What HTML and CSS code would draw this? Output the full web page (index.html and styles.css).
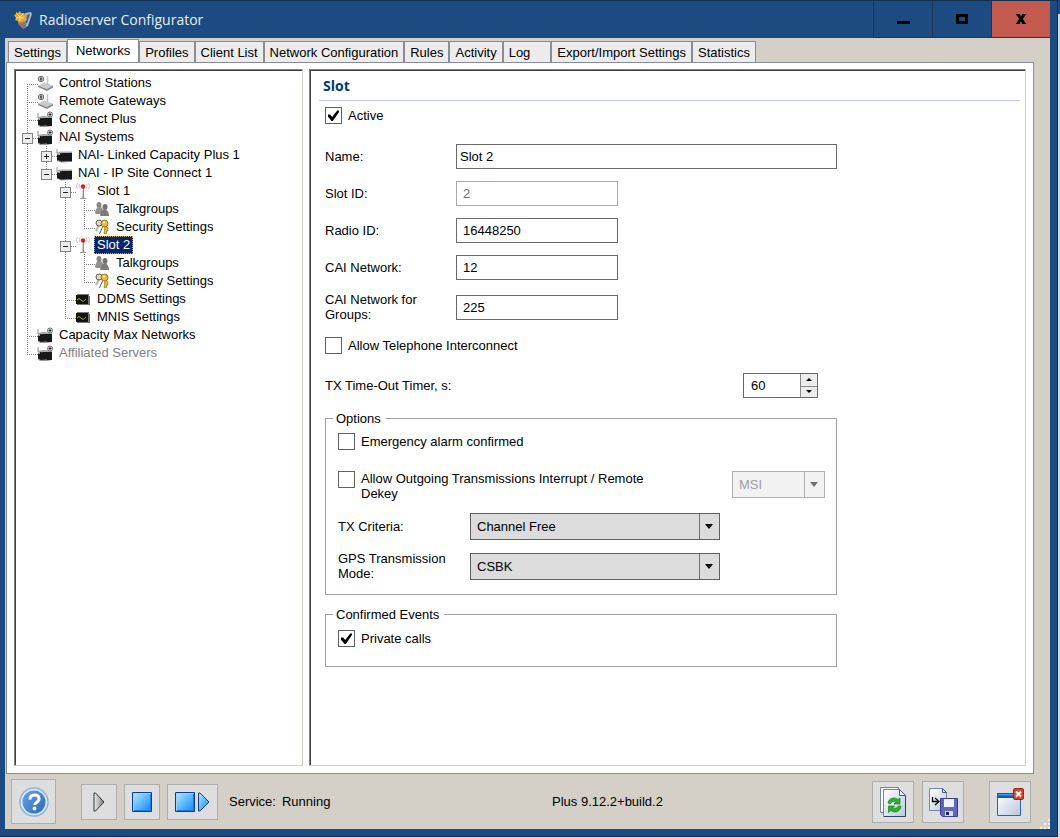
FILE: index.html
```html
<!DOCTYPE html>
<html lang="en">
<head>
  <meta charset="utf-8">
  <meta name="viewport" content="width=device-width, initial-scale=1.0">
  <title>Radioserver Configurator</title>
  <link rel="stylesheet" href="styles.css">
</head>
<body>
  <!-- Icon set -->
  <svg class="sprite" aria-hidden="true">
    <defs>
      <linearGradient id="blue" x1="0" y1="0" x2="1" y2="1">
        <stop offset="0" stop-color="#c4e6ff"/>
        <stop offset="0.5" stop-color="#5cbaff"/>
        <stop offset="1" stop-color="#0a86f5"/>
      </linearGradient>
      <linearGradient id="grey" x1="0" y1="0" x2="1" y2="0">
        <stop offset="0" stop-color="#eeeeee"/>
        <stop offset="1" stop-color="#777777"/>
      </linearGradient>
      <linearGradient id="paper" x1="0" y1="0" x2="1" y2="1">
        <stop offset="0" stop-color="#ffffff"/>
        <stop offset="1" stop-color="#b9c8de"/>
      </linearGradient>
      <linearGradient id="help" x1="0" y1="0" x2="1" y2="1">
        <stop offset="0" stop-color="#6ba5e6"/>
        <stop offset="1" stop-color="#2a68ba"/>
      </linearGradient>
    </defs>
    <symbol id="station" viewBox="0 0 16 16">
      <path d="M1 10.500l6-3 9 3-6 3.500z" fill="#c9cccd"/>
      <path d="M1 10.500l9 3.500 6-3.500v2L10 16l-9-4z" fill="#85898b"/>
      <path d="M10.500 1v9" stroke="#c0c3c5" stroke-width="1.500"/>
      <circle cx="4" cy="4" r="2.700" fill="#fff" stroke="#666"/>
      <path d="M4 2v4M2.500 4h3" stroke="#222"/>
    </symbol>
    <symbol id="repeater" viewBox="0 0 16 16">
      <path d="M1 2v5" stroke="#888"/>
      <path d="M1 6l2 1 12-.5v8.500l-11 1-3-1.500z" fill="#161918"/>
      <path d="M1 6l2 1v2l-2-.5z" fill="#b4b6b6"/>
      <path d="M1 6l3 1.200L15 6.500v-1L6 5z" fill="#a4a7a7"/>
      <path d="M1 14l3 1.500 6-.5" stroke="#aaa" fill="none"/>
      <circle cx="13" cy="3.500" r="2.500" fill="#fff" stroke="#666"/>
      <path d="M13 2v3M11.500 3.500h3" stroke="#222"/>
    </symbol>
    <symbol id="unit" viewBox="0 0 16 16">
      <path d="M1 2v5" stroke="#999"/>
      <path d="M1 5l3 1 12-.5v9l-11 .5-4-1.500z" fill="#161918"/>
      <path d="M1 5l3 1v2l-3-.5z" fill="#bbb"/>
      <path d="M1 5l3 1.200L16 5.500v-1H6z" fill="#a9acac"/>
      <path d="M2 13.500l3 1.500 9-.5" stroke="#8a8c8c" fill="none"/>
    </symbol>
    <symbol id="antenna" viewBox="0 0 16 16">
      <path d="M8 4L6.500 15h3z" fill="#c5c5c8"/>
      <path d="M8.500 5v10" stroke="#8a8a90"/>
      <path d="M5 15.500h6" stroke="#999"/>
      <circle cx="8" cy="3.500" r="2.200" fill="#d51f26"/>
      <path d="M4.500 1q-1 2 0 4M2.500 0q-2 3 0 6M11.500 1q1 2 0 4M13.500 0q2 3 0 6" stroke="#d2c6c6" fill="none"/>
    </symbol>
    <symbol id="people" viewBox="0 0 16 16">
      <ellipse cx="5" cy="4" rx="2.500" ry="3" fill="#8b8585"/>
      <path d="M1 12q1-5 3-6h3l3 4v3H2z" fill="#948f8f"/>
      <ellipse cx="11" cy="6" rx="2.500" ry="3" fill="#777070"/>
      <path d="M6 15q1-6 4-6.500h2q3 2 3 6.500z" fill="#7f7979"/>
      <path d="M11.500 10v3" stroke="#b56060"/>
    </symbol>
    <symbol id="keys" viewBox="0 0 16 16">
      <path d="M5 6L2 12" stroke="#b5b5b5" stroke-width="2"/>
      <circle cx="5" cy="4" r="3" fill="#e4dac0" stroke="#625b48"/>
      <path d="M11 7l-1 7.500h2.500V12h1.500V9l-2-2z" fill="#ecb52a" stroke="#8a6414" stroke-width=".6"/>
      <circle cx="10.500" cy="4.500" r="3.500" fill="#f2b92b" stroke="#80601d" stroke-width=".8"/>
      <circle cx="10" cy="3.500" r="1" fill="#fff"/>
      <path d="M8.500 8l-3 7" stroke="#555"/>
    </symbol>
    <symbol id="scope" viewBox="0 0 16 16">
      <path d="M2 3h12v11H2z" fill="#777"/>
      <path d="M1 4h12v9H1z" fill="#10140c"/>
      <path d="M2 9q2-3 4 0t5-1" stroke="#a8ad28" fill="none"/>
      <path d="M14.500 5v9" stroke="#666"/>
    </symbol>
  </svg>

  <div class="window">
    <header class="titlebar">
      <svg class="app-icon" viewBox="0 0 20 20" aria-hidden="true">
        <path d="M12 3l6-1 1 2-4 12-4 2z" fill="#aab4c3"/>
        <path d="M14 5l3-1-3 9-2 1z" fill="#3c5f91"/>
        <path d="M5 11l8 2v5l-3 1-5-5z" fill="#8a7776"/>
        <path d="M1 5l2-1V2l2 1 2-2 1 2h3l1 2 2 1-1 2 1 2-3 1-1 2-2-1-2 1-1-2-3-1 1-2z" fill="#e2aa30"/>
        <path d="M4 4l3 3 3-3M3 8l4-1 4 1M7 7v4" stroke="#fae39a" fill="none"/>
      </svg>
      <h1 class="window-title">Radioserver Configurator</h1>
      <div class="window-buttons">
        <button type="button" aria-label="Minimize">
          <svg width="14" height="12" viewBox="0 0 14 12"><path d="M1 8h13v3H1z"/></svg>
        </button>
        <button type="button" aria-label="Maximize">
          <svg width="12" height="10" viewBox="0 0 12 10"><path d="M1.500 1.500h9v7h-9z" fill="none" stroke="#000" stroke-width="3"/></svg>
        </button>
        <button type="button" class="close" aria-label="Close">
          <svg width="12" height="10" viewBox="0 0 12 10"><path d="M2.500 0l7 10M9.500 0l-7 10" stroke="#000" stroke-width="3"/><path d="M1 .5h4M7 .5h4M1 9.500h4M7 9.500h4" stroke="#000"/></svg>
        </button>
      </div>
    </header>

    <main class="client">
      <nav class="tabs" role="tablist">
        <button type="button" role="tab" class="tab">Settings</button>
        <button type="button" role="tab" class="tab active" aria-selected="true">Networks</button>
        <button type="button" role="tab" class="tab">Profiles</button>
        <button type="button" role="tab" class="tab">Client List</button>
        <button type="button" role="tab" class="tab">Network Configuration</button>
        <button type="button" role="tab" class="tab">Rules</button>
        <button type="button" role="tab" class="tab">Activity</button>
        <button type="button" role="tab" class="tab log">Log</button>
        <button type="button" role="tab" class="tab">Export/Import Settings</button>
        <button type="button" role="tab" class="tab">Statistics</button>
      </nav>

      <div class="tab-page">
        <aside class="tree-pane">
          <ul class="tree">
            <li><div class="node"><svg class="icon"><use href="#station"/></svg><span class="text">Control Stations</span></div></li>
            <li><div class="node"><svg class="icon"><use href="#station"/></svg><span class="text">Remote Gateways</span></div></li>
            <li><div class="node"><svg class="icon"><use href="#repeater"/></svg><span class="text">Connect Plus</span></div></li>
            <li>
              <div class="node"><button type="button" class="toggle" aria-label="Collapse"></button><svg class="icon"><use href="#repeater"/></svg><span class="text">NAI Systems</span></div>
              <ul>
                <li><div class="node"><button type="button" class="toggle plus" aria-label="Expand"></button><svg class="icon"><use href="#unit"/></svg><span class="text">NAI- Linked Capacity Plus 1</span></div></li>
                <li>
                  <div class="node"><button type="button" class="toggle" aria-label="Collapse"></button><svg class="icon"><use href="#unit"/></svg><span class="text">NAI - IP Site Connect 1</span></div>
                  <ul>
                    <li>
                      <div class="node"><button type="button" class="toggle" aria-label="Collapse"></button><svg class="icon"><use href="#antenna"/></svg><span class="text">Slot 1</span></div>
                      <ul>
                        <li><div class="node"><svg class="icon"><use href="#people"/></svg><span class="text">Talkgroups</span></div></li>
                        <li><div class="node"><svg class="icon"><use href="#keys"/></svg><span class="text">Security Settings</span></div></li>
                      </ul>
                    </li>
                    <li>
                      <div class="node"><button type="button" class="toggle" aria-label="Collapse"></button><svg class="icon"><use href="#antenna"/></svg><span class="text selected">Slot 2</span></div>
                      <ul>
                        <li><div class="node"><svg class="icon"><use href="#people"/></svg><span class="text">Talkgroups</span></div></li>
                        <li><div class="node"><svg class="icon"><use href="#keys"/></svg><span class="text">Security Settings</span></div></li>
                      </ul>
                    </li>
                    <li><div class="node"><svg class="icon"><use href="#scope"/></svg><span class="text">DDMS Settings</span></div></li>
                    <li><div class="node"><svg class="icon"><use href="#scope"/></svg><span class="text">MNIS Settings</span></div></li>
                  </ul>
                </li>
              </ul>
            </li>
            <li><div class="node"><svg class="icon"><use href="#repeater"/></svg><span class="text">Capacity Max Networks</span></div></li>
            <li><div class="node"><svg class="icon"><use href="#repeater"/></svg><span class="text muted">Affiliated Servers</span></div></li>
          </ul>
        </aside>

        <section class="detail-pane">
          <h2 class="pane-title">Slot</h2>
          <form class="slot-form">
            <label class="check"><input type="checkbox" checked>Active</label>

            <div class="fields">
              <label for="name">Name:</label>
              <input type="text" id="name" class="wide" value="Slot 2">
              <label for="slotId">Slot ID:</label>
              <input type="text" id="slotId" value="2" disabled>
              <label for="radioId">Radio ID:</label>
              <input type="text" id="radioId" value="16448250">
              <label for="caiNetwork">CAI Network:</label>
              <input type="text" id="caiNetwork" value="12">
              <label for="caiGroups">CAI Network for Groups:</label>
              <input type="text" id="caiGroups" value="225">
            </div>

            <label class="check"><input type="checkbox">Allow Telephone Interconnect</label>

            <div class="timer-row">
              <label for="timeout">TX Time-Out Timer, s:</label>
              <div class="spinner">
                <input type="number" id="timeout" value="60">
                <div class="spin-buttons">
                  <button type="button" class="up" aria-label="Increase"></button>
                  <button type="button" class="down" aria-label="Decrease"></button>
                </div>
              </div>
            </div>

            <fieldset class="options">
              <legend>Options</legend>
              <label class="check"><input type="checkbox">Emergency alarm confirmed</label>
              <div class="interrupt-row">
                <label class="check"><input type="checkbox"><span>Allow Outgoing Transmissions Interrupt / Remote Dekey</span></label>
                <div class="select">
                  <select aria-label="Interrupt type" disabled><option>MSI</option></select>
                </div>
              </div>
              <div class="select-row">
                <label for="criteria">TX Criteria:</label>
                <div class="select">
                  <select id="criteria"><option>Channel Free</option></select>
                </div>
              </div>
              <div class="select-row">
                <label for="gpsMode">GPS Transmission Mode:</label>
                <div class="select">
                  <select id="gpsMode"><option>CSBK</option></select>
                </div>
              </div>
            </fieldset>

            <fieldset class="events">
              <legend>Confirmed Events</legend>
              <label class="check"><input type="checkbox" checked>Private calls</label>
            </fieldset>
          </form>
        </section>
      </div>

      <footer class="toolbar">
        <button type="button" class="tool help" aria-label="Help">
          <svg width="30" height="30" viewBox="0 0 30 30">
            <circle cx="15" cy="15" r="14" fill="#dfe9f6" stroke="#8fb2df" stroke-width="1.500"/>
            <circle cx="15" cy="15" r="11.500" fill="url(#help)"/>
            <path d="M11 12.500q0-4.500 4.500-4.500t4.500 3.700q0 2.300-2.500 3.800-1.700 1-1.700 2.500" fill="none" stroke="#fff" stroke-width="3"/>
            <circle cx="15.500" cy="21.500" r="1.900" fill="#fff"/>
          </svg>
        </button>
        <div class="service-buttons">
          <button type="button" class="tool" aria-label="Start service" disabled>
            <svg width="12" height="20" viewBox="0 0 12 20"><path d="M1 1v18h1.500L11 10 2.500 1z" fill="url(#grey)" stroke="#333"/></svg>
          </button>
          <button type="button" class="tool" aria-label="Stop service">
            <svg width="20" height="20" viewBox="0 0 20 20"><path d="M.5 .5h19v19H.5z" fill="url(#blue)" stroke="#0c3b94"/><path d="M1.500 18.500v-17h17" fill="none" stroke="#9fd2ff"/><path d="M18.500 2v16.500H2" fill="none" stroke="#1f78e8"/></svg>
          </button>
          <button type="button" class="tool restart" aria-label="Restart service">
            <svg width="35" height="20" viewBox="0 0 35 20"><path d="M.5 .5h19v19H.5z" fill="url(#blue)" stroke="#0c3b94"/><path d="M1.500 18.500v-17h17" fill="none" stroke="#9fd2ff"/><path d="M18.500 2v16.500H2" fill="none" stroke="#1f78e8"/><path d="M23.500 1v18H25l9-9-9-9z" fill="url(#blue)" stroke="#0c3b94"/></svg>
          </button>
        </div>
        <p class="status"><span>Service:</span><span>Running</span></p>
        <p class="version">Plus 9.12.2+build.2</p>
        <div class="file-buttons">
          <button type="button" class="tool" aria-label="Reload configuration">
            <svg width="28" height="32" viewBox="0 0 28 32">
              <path d="M1.500 1.500h18v25h-18z" fill="#fff" stroke="#7386a8"/>
              <path d="M4.500 3.500h16l6 6v21h-22z" fill="url(#paper)" stroke="#6f83a6"/>
              <path d="M20.500 3.500v6h6z" fill="#e8eef8" stroke="#44577c"/>
              <path d="M26.500 10v20.500H5" fill="none" stroke="#31435f"/>
              <path d="M9 17q1-5 6-5 2.500 0 4 1.500l2-1.500v6h-6l2-2q-4-2-6 2z" fill="#2bb02b" stroke="#178417" stroke-width=".7"/>
              <path d="M22 20q-1 6-6 6-2.500 0-4-1.500l-2.500 2V20h6l-2 2q4 1.500 6-2z" fill="#2bb02b" stroke="#178417" stroke-width=".7"/>
            </svg>
          </button>
          <button type="button" class="tool" aria-label="Save configuration">
            <svg width="30" height="32" viewBox="0 0 30 32">
              <path d="M1.500 2.500h13l4 4v18h-17z" fill="url(#paper)" stroke="#7386a8"/>
              <path d="M14.500 2.500v4h4z" fill="#dfe7f4" stroke="#44577c"/>
              <path d="M4.500 11v4.500h5M7 12l4 3.500L7 19" fill="none" stroke="#000" stroke-width="1.300"/>
              <path d="M12.500 12.500h17v18h-15l-2-2z" fill="#6266bd" stroke="#3b3f8c"/>
              <path d="M16 13h10v8H16z" fill="#edf1fa"/>
              <path d="M17 25h8v5h-8z" fill="#d8dcea"/>
              <path d="M18 26h3v3h-3z" fill="#22254d"/>
            </svg>
          </button>
          <button type="button" class="tool exit" aria-label="Exit">
            <svg width="28" height="28" viewBox="0 0 28 28">
              <path d="M1.500 5.500h23v22h-23z" fill="url(#paper)" stroke="#2f62b5"/>
              <path d="M1 5h24v5H1z" fill="#1b55a8"/>
              <path d="M2 6h15v1.500H2z" fill="#3fa0ee"/>
              <rect x="17.500" y=".5" width="10" height="11" rx="1.500" fill="#d8452c" stroke="#a32612"/>
              <path d="M20 3.500l5 5M25 3.500l-5 5" stroke="#fff" stroke-width="2"/>
            </svg>
          </button>
        </div>
        <svg class="grip" width="10" height="10" viewBox="0 0 10 10" aria-hidden="true"><path d="M8 0h2v2H8zM4 4h2v2H4zM8 4h2v2H8zM0 8h2v2H0zM4 8h2v2H4zM8 8h2v2H8z" fill="#f4f2ee"/></svg>
      </footer>
    </main>
  </div>
</body>
</html>
```

FILE: styles.css
```css
*, *::before, *::after {
  box-sizing: border-box;
  margin: 0;
  padding: 0;
}

body {
  height: 100vh;
  padding: 0 2px 1px 0;
  background: linear-gradient(#1b4b80 14px, #dcd9d2 14px);
  font-family: "Liberation Sans", Arial, sans-serif;
  font-size: 13px;
  line-height: 15px;
  color: #000;
}

button, input, select {
  font: inherit;
  color: inherit;
}

.sprite {
  position: absolute;
  width: 0;
  height: 0;
}

.window {
  display: flex;
  flex-direction: column;
  height: 100%;
  padding: 0 7px 7px 5px;
  background-color: #1b4b80;
  border: 1px solid #14304f;
  border-left: none;
}

/* Title bar */
.titlebar {
  display: flex;
  align-items: center;
  height: 37px;
  padding-left: 8px;
}

.app-icon {
  width: 20px;
  height: 20px;
}

.window-title {
  flex: 1;
  margin-left: 6px;
  font-family: "Open Sans", "Segoe UI", sans-serif;
  font-size: 14px;
  font-weight: 400;
  line-height: 20px;
  color: #e6edf5;
}

.window-buttons {
  display: flex;
  align-self: stretch;
}

.window-buttons button {
  display: flex;
  justify-content: center;
  align-items: center;
  width: 59px;
  background-color: #1b4b80;
  border: 1px solid #24344c;
  border-width: 0 0 1px 1px;
}

.window-buttons .close {
  background-color: #c25a50;
}

/* Client area */
.client {
  flex: 1;
  display: flex;
  flex-direction: column;
  min-height: 0;
  padding-left: 1px;
  background-color: #d4d0c8;
}

.tabs {
  display: flex;
  align-items: flex-end;
  height: 24px;
  padding-left: 2px;
}

.tab {
  height: 21px;
  padding: 0 5px;
  line-height: 19px;
  white-space: nowrap;
  background-color: #ececec;
  border: 1px solid #898c95;
  border-bottom: none;
}

.tab.log {
  padding-right: 20px;
}

.tab.active {
  height: 24px;
  margin-bottom: -1px;
  padding: 0 8px 2px;
  background-color: #fff;
}

.tab-page {
  flex: 1;
  display: flex;
  gap: 6px;
  min-height: 0;
  margin-right: 16px;
  padding: 6px 7px 7px;
  background-color: #fff;
  border: 1px solid #898c95;
}

.tree-pane, .detail-pane {
  border-style: solid;
  border-width: 1px;
  border-color: #808080 #d4d0c8 #d4d0c8 #808080;
  box-shadow: inset 1px 1px 0 #404040;
}

/* Tree */
.tree-pane {
  width: 289px;
  padding: 4px 2px 0 3px;
  overflow: auto;
}

.tree, .tree ul {
  list-style: none;
}

.tree ul {
  margin-left: 19px;
}

.tree li {
  background: repeating-linear-gradient(#808080 0 1px, transparent 1px 2px) no-repeat 9px 0 / 1px 100%;
}

.tree li:last-child {
  background-size: 1px 10px;
}

.tree > li:first-child {
  background-position: 9px 10px;
}

.node {
  display: flex;
  align-items: center;
  height: 18px;
  padding-left: 19px;
  background: repeating-linear-gradient(90deg, #808080 0 1px, transparent 1px 2px) no-repeat 9px 10px / 11px 1px;
}

.toggle {
  width: 11px;
  height: 11px;
  margin: 3px 4px 0 -15px;
  background: linear-gradient(#222, #222) no-repeat center / 5px 1px #ececec;
  border: 1px solid #848484;
}

.toggle.plus {
  background: linear-gradient(#222, #222) no-repeat center / 5px 1px, linear-gradient(#222, #222) no-repeat center / 1px 5px #ececec;
}

.icon {
  flex: none;
  width: 16px;
  height: 16px;
}

.text {
  height: 18px;
  margin-left: 3px;
  padding: 0 3px;
  line-height: 17px;
  white-space: nowrap;
}

.text.selected {
  color: #fff;
  background-color: #0a246a;
  outline: 1px dotted #c8b060;
  outline-offset: -1px;
}

.text.muted {
  color: #808080;
}

/* Slot form */
.detail-pane {
  flex: 1;
  padding: 6px 5px 0 9px;
}

.pane-title {
  height: 25px;
  padding-left: 4px;
  font-family: "Open Sans", Tahoma, sans-serif;
  font-size: 14px;
  font-weight: 700;
  line-height: 20px;
  color: #003a75;
  border-bottom: 1px solid #c3c8e0;
}

.slot-form {
  width: 512px;
  margin: 6px 0 0 6px;
}

.check {
  display: flex;
  align-items: flex-start;
  gap: 6px;
  line-height: 17px;
}

.check span {
  line-height: 15px;
}

input[type="checkbox"] {
  flex: none;
  display: grid;
  place-items: center;
  width: 17px;
  height: 17px;
  appearance: none;
  background-color: #fff;
  border: 1px solid #606060;
}

input[type="checkbox"]:checked::before {
  content: "";
  width: 11px;
  height: 11px;
  background-color: #000;
  clip-path: polygon(0 42%, 20% 42%, 38% 64%, 84% 4%, 100% 4%, 100% 18%, 44% 100%, 32% 100%, 0 62%);
}

.fields {
  display: grid;
  grid-template-columns: 119px 162px 1fr;
  column-gap: 12px;
  row-gap: 12px;
  align-items: center;
  margin: 20px 0 15px;
}

.fields label {
  grid-column: 1;
}

.fields input {
  grid-column: 2;
  width: 100%;
  height: 25px;
  padding: 0 6px;
  background-color: #fff;
  border: 1px solid #6a6a6a;
}

.fields .wide {
  grid-column: 2 / 4;
  padding: 0 3px;
}

.fields input:disabled {
  color: #6d6d6d;
  border-color: #aaa;
}

.timer-row {
  display: flex;
  justify-content: space-between;
  align-items: center;
  margin: 19px 19px 13px 0;
}

.spinner {
  display: flex;
  width: 75px;
  height: 25px;
  border: 1px solid #6a6a6a;
}

.spinner input {
  flex: 1;
  min-width: 0;
  padding-left: 7px;
  background-color: #fff;
  border: none;
  appearance: textfield;
}

.spinner input::-webkit-inner-spin-button {
  appearance: none;
}

.spin-buttons {
  display: grid;
  grid-template-rows: 1fr 1fr;
  width: 17px;
  border-left: 1px solid #888;
}

.spin-buttons button {
  display: grid;
  place-items: center;
  background-color: #ececec;
  border: none;
}

.spin-buttons .down {
  border-top: 1px solid #888;
}

.spin-buttons button::before {
  content: "";
  border: 3px solid transparent;
  border-top-width: 0;
  border-bottom-color: #000;
}

.spin-buttons .down::before {
  border-width: 3px 3px 0;
  border-color: #000 transparent transparent;
}

fieldset {
  padding: 0 11px 0 12px;
  border: 1px solid #a0a0a0;
}

legend {
  margin-left: -5px;
  padding: 0 5px 0 3px;
}

.options {
  height: 184px;
  padding-top: 7px;
  margin-bottom: 12px;
}

.events {
  height: 60px;
  padding-top: 8px;
}

.interrupt-row {
  display: flex;
  justify-content: space-between;
  margin-top: 21px;
}

.interrupt-row .check {
  width: 330px;
}

.interrupt-row .select {
  width: 93px;
}

.select-row {
  display: flex;
  align-items: center;
  min-height: 30px;
  margin-top: 10px;
}

.select-row label {
  width: 132px;
  padding-right: 20px;
}

.select-row .select {
  width: 250px;
}

.select {
  position: relative;
}

.select select {
  display: block;
  width: 100%;
  height: 27px;
  padding-left: 6px;
  appearance: none;
  background: linear-gradient(#707070, #707070) no-repeat right 19px top / 1px 100% #dcdcdc;
  border: 1px solid #606060;
  border-radius: 0;
}

.select::after {
  content: "";
  position: absolute;
  top: 11px;
  right: 7px;
  border: 4px solid transparent;
  border-top: 5px solid #000;
  border-bottom: none;
}

.interrupt-row .select select {
  color: #a0a0a0;
  background: linear-gradient(#b0b0b0, #b0b0b0) no-repeat right 19px top / 1px 100% #f2f2f2;
  border-color: #b0b0b0;
  opacity: 1;
}

.interrupt-row .select::after {
  border-top-color: #707070;
}

/* Bottom toolbar */
.toolbar {
  display: flex;
  align-items: center;
  height: 55px;
  padding-left: 5px;
}

.tool {
  display: flex;
  justify-content: center;
  align-items: center;
  width: 36px;
  height: 36px;
  background-color: #dedede;
  border: 1px solid #adadad;
}

.tool.help {
  width: 45px;
  height: 45px;
}

.service-buttons {
  display: flex;
  gap: 7px;
  margin-left: 25px;
}

.tool.restart {
  width: 51px;
}

.status {
  display: flex;
  gap: 6px;
  width: 323px;
  margin-left: 11px;
}

.file-buttons {
  display: flex;
  gap: 8px;
  margin-left: auto;
}

.file-buttons .tool {
  width: 42px;
  height: 42px;
}

.file-buttons .exit {
  margin-left: 17px;
}

.grip {
  align-self: flex-end;
  margin-left: 9px;
}
```
